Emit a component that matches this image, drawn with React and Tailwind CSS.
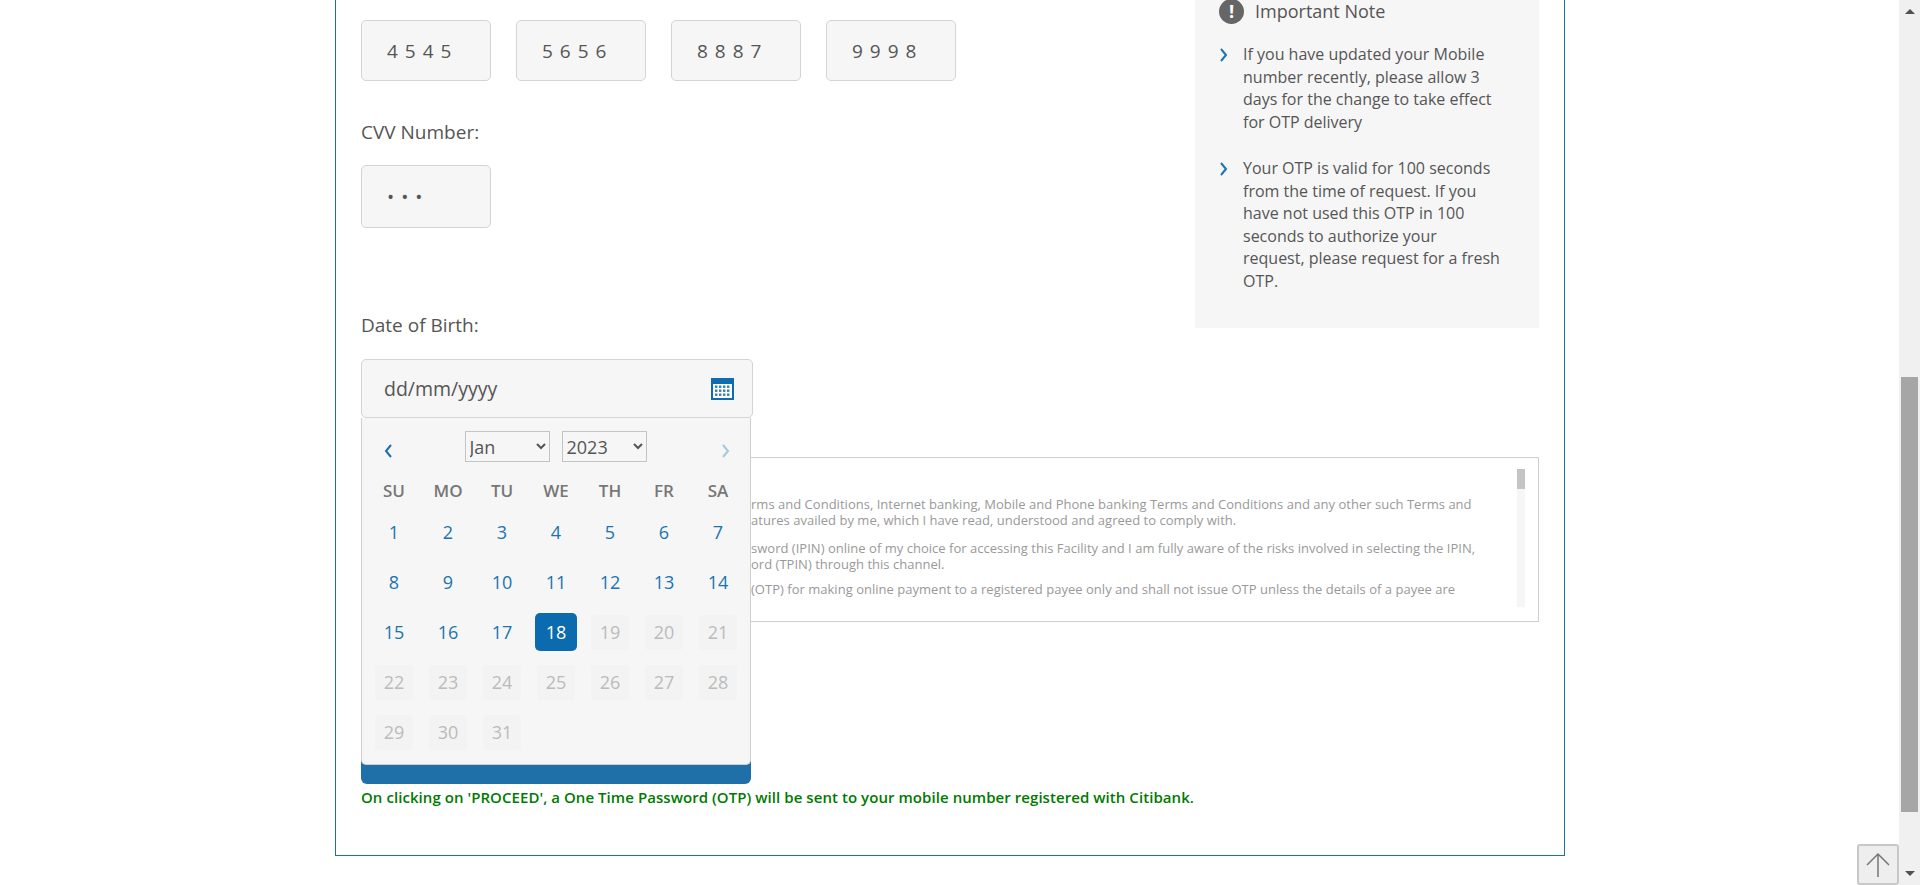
import React from 'react';

const bodyFont = "font-['Open_Sans',sans-serif]";

const cardNumbers = ['4545', '5656', '8887', '9998'];

const calendarDays = Array.from({ length: 31 }, (_, i) => i + 1);

const weekDays = ['SU', 'MO', 'TU', 'WE', 'TH', 'FR', 'SA'];

// the left part of these lines sits under the open date popup
const termLines = [
    { text: 'rms and Conditions, Internet banking, Mobile and Phone banking Terms and Conditions and any other such Terms and', space: '' },
    { text: 'atures availed by me, which I have read, understood and agreed to comply with.', space: '' },
    { text: 'sword (IPIN) online of my choice for accessing this Facility and I am fully aware of the risks involved in selecting the IPIN,', space: 'mt-[13px]' },
    { text: 'ord (TPIN) through this channel.', space: '' },
    { text: '(OTP) for making online payment to a registered payee only and shall not issue OTP unless the details of a payee are', space: 'mt-[10px]' },
];

const noteItems = [
    ['If you have updated your Mobile', 'number recently, please allow 3', 'days for the change to take effect', 'for OTP delivery'],
    ['Your OTP is valid for 100 seconds', 'from the time of request. If you', 'have not used this OTP in 100', 'seconds to authorize your', 'request, please request for a fresh', 'OTP.'],
];

const Chevron = ({ dir = 'right', className = '' }) => (
    <svg width="10" height="16" viewBox="0 0 10 16" className={className} fill="none" stroke="currentColor" strokeWidth="2">
        <path d={dir === 'left' ? 'M8 2 L3 8 L8 14' : 'M2 2 L7 8 L2 14'} />
    </svg>
);

const CalendarIcon = () => (
    <svg width="23" height="22" viewBox="0 0 23 22">
        <rect width="23" height="22" fill="#0f6cb0" />
        <rect x="2" y="6" width="19" height="14" fill="#ffffff" />
        {[0, 1, 2].map(r => [0, 1, 2, 3].map(c => (
            <rect key={`${r}-${c}`} x={4 + c * 4} y={7.5 + r * 4} width="2.4" height="2.4" fill="#2f80bd" />
        )))}
    </svg>
);

const TextBox = ({ value, type = 'text', height = 'h-[61px]' }) => (
    <input
        readOnly
        type={type}
        value={value}
        className={`w-[130px] ${height} rounded-[5px] border border-[#d4d4d4] bg-[#f6f6f6] pl-[25px] text-[19px] tracking-[7px] text-[#555] outline-none`}
    />
);

const Day = ({ day }) => {
    if (day === 18) {
        return <div className="flex h-[38px] w-[42px] items-center justify-center rounded-[5px] bg-[#0b6bae] text-white">{day}</div>;
    }
    if (day > 18) {
        return <div className="flex h-[35px] w-[38px] items-center justify-center rounded-[4px] bg-[#f3f3f3] text-[#bbbbbb]">{day}</div>;
    }
    return <div className="flex h-[35px] w-[38px] items-center justify-center text-[#1a74b0]">{day}</div>;
};

const DatePopup = () => (
    <div className="absolute left-0 top-full z-10 h-[347px] w-[390px] rounded-b-[5px] border border-t-0 border-[#cfcfcf] bg-[#f6f6f6] pl-[5px] pt-[13px]">
        <div className="relative flex h-[31px] justify-center gap-[12px] pr-[6px]">
            <Chevron dir="left" className="absolute left-[16px] top-[12px] text-[#1a6fb0]" />
            <select defaultValue="Jan" className="h-[31px] w-[85px] border border-[#c4c4c4] bg-[#f6f6f6] text-[18px] text-[#555]">
                <option>Jan</option>
            </select>
            <select defaultValue="2023" className="h-[31px] w-[85px] border border-[#c4c4c4] bg-[#f6f6f6] text-[18px] text-[#555]">
                <option>2023</option>
            </select>
            <Chevron className="absolute left-[354px] top-[12px] text-[#a3c8e0]" />
        </div>
        <div className="mt-[14px] grid h-[30px] grid-cols-[repeat(7,54px)] items-center text-center text-[17px] font-semibold text-[#777]">
            {weekDays.map(d => <div key={d}>{d}</div>)}
        </div>
        <div className="mt-px grid grid-cols-[repeat(7,54px)] auto-rows-[50px] items-center justify-items-center text-[18px]">
            {calendarDays.map(d => <Day key={d} day={d} />)}
        </div>
    </div>
);

const ImportantNote = () => (
    <aside className="h-[328px] w-[344px] shrink-0 bg-[#f6f6f6] pl-[24px] pr-[20px]">
        <div className="flex h-[22px] items-center gap-[11px]">
            <div className="flex h-[25px] w-[25px] items-center justify-center rounded-full bg-[#666] text-[18px] font-bold text-white">!</div>
            <span className="text-[18px] text-[#555]">Important Note</span>
        </div>
        <ul className="mt-[21px] flex flex-col gap-[24px] text-[16px] leading-[22.5px] text-[#555]">
            {noteItems.map((lines, i) => (
                <li key={i} className="flex gap-[13px]">
                    <Chevron className="mt-[4px] shrink-0 text-[#1a74b0]" />
                    <div className="pl-px">
                        {lines.map(line => <p key={line} className="whitespace-nowrap">{line}</p>)}
                    </div>
                </li>
            ))}
        </ul>
    </aside>
);

const TermsBox = () => (
    <div className="relative mt-[39px] h-[165px] w-[1178px] overflow-hidden border border-[#cfcfcf] pl-[389px] pt-[39px] text-[13px] leading-[15.5px] tracking-[0.02px] text-[#999]">
        {termLines.map((line, i) => (
            <div key={i} className={`whitespace-nowrap ${line.space}`}>{line.text}</div>
        ))}
        <div className="absolute left-[1155px] top-[11px] h-[138px] w-[8px] bg-[#f6f6f6]">
            <div className="h-[20px] w-[8px] bg-[#c4c4c4]" />
        </div>
    </div>
);

const FakeScrollbar = () => (
    <div className="flex h-full w-[21px] shrink-0 flex-col items-center bg-[#f0f0f0]">
        <div className="mt-[9px] h-0 w-0 border-x-[5px] border-b-[5px] border-x-transparent border-b-[#505050]" />
        <div className="mt-[363px] h-[435px] w-[17px] bg-[#a6a6a6]" />
        <div className="mt-[59px] h-0 w-0 border-x-[5px] border-t-[5px] border-x-transparent border-t-[#505050]" />
    </div>
);

const App = () => {
    return (
        <div className={`relative flex h-[885px] w-[1920px] overflow-hidden bg-white ${bodyFont} text-[#555]`}>
            <main className="flex-1">
                <div className="ml-[335px] h-[856px] w-[1230px] border-x border-b border-[#1f70a8] pl-[25px]">
                    <div className="flex w-[1178px] justify-between">
                        <div className="pt-[20px]">
                            <div className="flex gap-[25px]">
                                {cardNumbers.map(n => <TextBox key={n} value={n} />)}
                            </div>
                            <label className="mt-[39px] block h-[24px] text-[19px] leading-[24px]">CVV Number:</label>
                            <div className="mt-[21px]">
                                <TextBox value="123" type="password" height="h-[63px]" />
                            </div>
                            <label className="mt-[85px] block h-[24px] text-[19px] leading-[24px]">Date of Birth:</label>
                            <div className="relative mt-[22px] h-[59px] w-[392px]">
                                <div className="flex h-full items-center justify-between rounded-[5px] border border-[#d4d4d4] bg-[#f6f6f6] pl-[22px] pr-[18px] text-[19.5px]">
                                    <span>dd/mm/yyyy</span>
                                    <CalendarIcon />
                                </div>
                                <DatePopup />
                            </div>
                        </div>
                        <ImportantNote />
                    </div>
                    <TermsBox />
                    <button aria-label="PROCEED" className="mt-[98px] block h-[64px] w-[390px] rounded-[6px] bg-[#1f70a8]" />
                    <p className="mt-[3px] text-[15px] font-semibold leading-[20px] tracking-[0.06px] text-[#007a00]">
                        On clicking on 'PROCEED', a One Time Password (OTP) will be sent to your mobile number registered with Citibank.
                    </p>
                </div>
            </main>
            <FakeScrollbar />
            <button className="absolute bottom-0 right-[21px] flex h-[41px] w-[42px] items-center justify-center rounded-[3px] border-2 border-[#c8c8c8] bg-[#eeeeee] text-[#777]">
                <svg width="28" height="28" viewBox="0 0 28 28" fill="none" stroke="currentColor" strokeWidth="1.5">
                    <path d="M14 26 V3 M3 14 L14 3 L25 14" />
                </svg>
            </button>
        </div>
    );
};

export default App;
